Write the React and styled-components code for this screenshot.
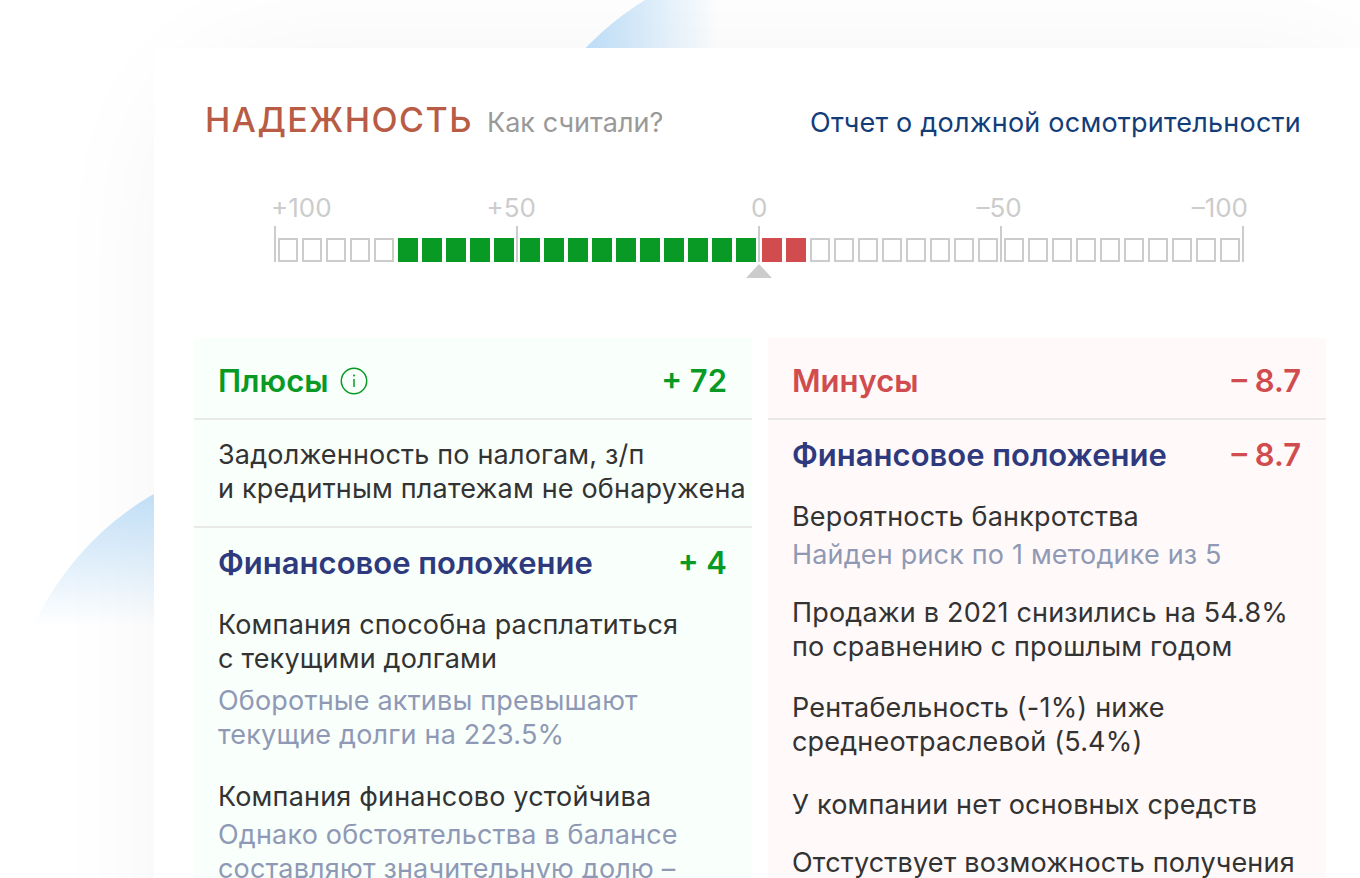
import React from 'react';
import styled, { createGlobalStyle } from 'styled-components';

const GlobalStyle = createGlobalStyle`
  html, body {
    margin: 0;
    padding: 0;
    background: #fff;
  }
  * {
    box-sizing: border-box;
  }
`;

const Page = styled.div`
  position: relative;
  isolation: isolate;
  height: 878px;
  overflow: hidden;
  padding: 48px 0 0 154px;
  font-family: Inter, "Noto Sans", sans-serif;
  background: #fff;
`;

const TopBlob = styled.div`
  position: absolute;
  left: 501px;
  top: -45px;
  width: 606px;
  height: 606px;
  border-radius: 50%;
  background: linear-gradient(90deg, #bcdcf6 14%, rgba(255, 255, 255, 0) 36%);
`;

const LeftBlob = styled.div`
  position: absolute;
  left: 5px;
  top: 453px;
  width: 600px;
  height: 600px;
  border-radius: 50%;
  background: linear-gradient(180deg, #bcdcf6 5%, rgba(255, 255, 255, 0) 29%);
`;

const Card = styled.div`
  position: relative;
  min-height: 1000px;
  padding: 52px 34px 0 40px;
  background: #fff;

  &::before {
    content: '';
    position: absolute;
    z-index: -1;
    inset: 0;
    border-radius: 140px 0 0 0;
    box-shadow: 0 0 120px rgba(0, 0, 0, 0.045);
  }
`;

const Header = styled.div`
  display: flex;
  align-items: baseline;
  height: 40px;
  padding: 0 0 0 11px;
`;

const Title = styled.span`
  font-size: 34px;
  font-weight: 500;
  letter-spacing: 1.5px;
  line-height: 40px;
  color: #b85c45;
`;

const HowLink = styled.span`
  margin-left: 14px;
  font-size: 27px;
  letter-spacing: 0.05px;
  color: #999;
`;

const ReportLink = styled.span`
  margin-left: auto;
  padding-right: 25px;
  font-size: 27px;
  letter-spacing: 0.22px;
  color: #123d78;
`;

const Labels = styled.div`
  display: flex;
  height: 30px;
  margin: 53px 0 3px 77px;
  font-size: 26px;
  line-height: 30px;
  color: #ccc;
`;

const Label = styled.span`
  margin-left: ${(p) => p.$offset}px;
`;

const Scale = styled.div`
  position: relative;
  display: flex;
  align-items: flex-end;
  height: 36px;
  margin-left: 80px;
`;

const Tick = styled.div`
  flex: none;
  width: 2px;
  height: 36px;
  background: #ccc;
`;

const Section = styled.div`
  display: flex;
  flex: none;
  gap: 4px;
  padding: 0 2px;
`;

const Cell = styled.div`
  width: 20px;
  height: 24px;
  border: ${(p) => (p.$color ? 'none' : '2px solid #ccc')};
  background: ${(p) => p.$color || 'transparent'};
`;

const Pointer = styled.div`
  position: absolute;
  left: 472px;
  top: 38px;
  width: 0;
  height: 0;
  border-left: 13px solid transparent;
  border-right: 13px solid transparent;
  border-bottom: 14px solid #ccc;
`;

const Columns = styled.div`
  display: flex;
  gap: 16px;
  margin-top: 76px;
`;

const Panel = styled.div`
  flex: none;
  width: 558px;
  min-height: 700px;
  background: ${(p) => p.$bg};
`;

const PanelHead = styled.div`
  display: flex;
  align-items: center;
  justify-content: space-between;
  height: 82px;
  padding: 5px 25px 0 24px;
  border-bottom: 2px solid #e8e9e8;
`;

const HeadLeft = styled.div`
  display: flex;
  align-items: center;
  gap: 11px;
`;

const HeadText = styled.span`
  font-size: 31px;
  font-weight: 600;
  color: ${(p) => p.$color};
`;

const Block = styled.div`
  padding: 18px 0 20px 24px;
  border-bottom: 2px solid #e8e9e8;
`;

const Group = styled.div`
  padding: 16px 25px 0 24px;
`;

const GroupHead = styled.div`
  display: flex;
  align-items: center;
  justify-content: space-between;
  height: 36px;
  margin-bottom: 28px;
`;

const GroupTitle = styled.span`
  font-size: 31px;
  font-weight: 600;
  color: #2e3a7d;
`;

const Text = styled.div`
  margin-top: ${(p) => p.$top || 0}px;
  font-size: 27px;
  line-height: 34px;
  letter-spacing: 0.18px;
  white-space: nowrap;
  color: ${(p) => (p.$muted ? '#8f99b5' : '#333')};
`;

const green = '#089a24';
const red = '#d14c4e';

const cells = (filled, color) =>
  Array.from({ length: 10 }, (_, i) => <Cell key={i} $color={i < filled ? color : null} />);

const leftFill = (filled, color) =>
  Array.from({ length: 10 }, (_, i) => <Cell key={i} $color={i >= 10 - filled ? color : null} />);

function InfoIcon() {
  return (
    <svg width="28" height="28" viewBox="0 0 28 28" fill="none" stroke={green} strokeWidth="1.5">
      <circle cx="14" cy="14" r="12.7" />
      <line x1="14" y1="12" x2="14" y2="20" />
      <circle cx="14" cy="8.5" r="1" fill={green} stroke="none" />
    </svg>
  );
}

export default function App() {
  return (
    <Page>
      <GlobalStyle />
      <TopBlob />
      <LeftBlob />
      <Card>
        <Header>
          <Title>НАДЕЖНОСТЬ</Title>
          <HowLink>Как считали?</HowLink>
          <ReportLink>Отчет о должной осмотрительности</ReportLink>
        </Header>

        <Labels>
          <Label $offset={0}>+100</Label>
          <Label $offset={155}>+50</Label>
          <Label $offset={215}>0</Label>
          <Label $offset={209}>–50</Label>
          <Label $offset={170}>–100</Label>
        </Labels>

        <Scale>
          <Tick />
          <Section>{leftFill(5, green)}</Section>
          <Tick />
          <Section>{leftFill(10, green)}</Section>
          <Tick />
          <Section>{cells(2, red)}</Section>
          <Tick />
          <Section>{cells(0)}</Section>
          <Tick />
          <Pointer />
        </Scale>

        <Columns>
          <Panel $bg="#f9fffb">
            <PanelHead>
              <HeadLeft>
                <HeadText $color={green}>Плюсы</HeadText>
                <InfoIcon />
              </HeadLeft>
              <HeadText $color={green}>+ 72</HeadText>
            </PanelHead>
            <Block>
              <Text>Задолженность по налогам, з/п</Text>
              <Text>и кредитным платежам не обнаружена</Text>
            </Block>
            <Group>
              <GroupHead>
                <GroupTitle>Финансовое положение</GroupTitle>
                <HeadText $color={green}>+ 4</HeadText>
              </GroupHead>
              <Text>Компания способна расплатиться</Text>
              <Text>с текущими долгами</Text>
              <Text $muted $top={8}>Оборотные активы превышают</Text>
              <Text $muted>текущие долги на 223.5%</Text>
              <Text $top={28}>Компания финансово устойчива</Text>
              <Text $muted $top={4}>Однако обстоятельства в балансе</Text>
              <Text $muted>составляют значительную долю –</Text>
            </Group>
          </Panel>

          <Panel $bg="#fff9f9">
            <PanelHead>
              <HeadText $color={red}>Минусы</HeadText>
              <HeadText $color={red}>– 8.7</HeadText>
            </PanelHead>
            <Group>
              <GroupHead>
                <GroupTitle>Финансовое положение</GroupTitle>
                <HeadText $color={red}>– 8.7</HeadText>
              </GroupHead>
              <Text>Вероятность банкротства</Text>
              <Text $muted $top={4}>Найден риск по 1 методике из 5</Text>
              <Text $top={24}>Продажи в 2021 снизились на 54.8%</Text>
              <Text>по сравнению с прошлым годом</Text>
              <Text $top={27}>Рентабельность (-1%) ниже</Text>
              <Text>среднеотраслевой (5.4%)</Text>
              <Text $top={29}>У компании нет основных средств</Text>
              <Text $top={24}>Отстуствует возможность получения</Text>
            </Group>
          </Panel>
        </Columns>
      </Card>
    </Page>
  );
}
